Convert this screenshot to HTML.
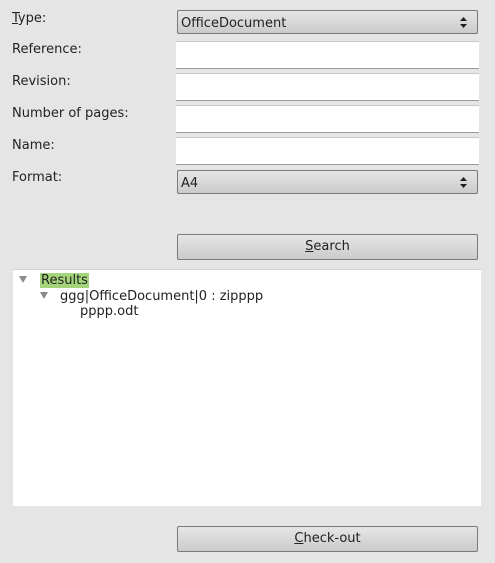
<!DOCTYPE html>
<html><head><style>
body{margin:0;width:495px;height:563px;background:#e5e5e5;font-family:"DejaVu Sans","Liberation Sans",sans-serif;font-size:13px;color:#222;position:relative;overflow:hidden}
.l{position:absolute;left:12px}
.combo,.btn{position:absolute;left:177px;width:301px;height:24px;border:1px solid #7a7a7a;border-radius:2px;background:linear-gradient(#e6e6e6,#cbcbcb);box-sizing:border-box}
.combo span{position:absolute;left:3px;top:5px}
.arr{position:absolute;right:10px;top:6px;width:7px;height:11px}
.in{position:absolute;left:176px;width:303px;height:28px;background:#fff;border-top:1px solid #c9c9c9;border-bottom:1px solid #9a9a9a;box-sizing:border-box}
.btn{text-align:center;line-height:22px}
u{text-decoration:underline}
.tree{position:absolute;left:13px;top:269px;width:468px;height:236px;background:#fff;border-top:1px solid #d0d0d0}
.tri{position:absolute;width:0;height:0;border-left:4px solid transparent;border-right:4px solid transparent;border-top:7px solid #8a8a8a}
</style></head><body>
<div class="l" style="top:11px"><u>T</u>ype:</div>
<div class="combo" style="top:10px"><span>OfficeDocument</span><svg class="arr" viewBox="0 0 7 11"><path d="M0 4L3.5 0L7 4Z M0 7L3.5 11L7 7Z" fill="#222"/></svg></div>
<div class="l" style="top:42px">Reference:</div>
<div class="in" style="top:41px"></div>
<div class="l" style="top:74px">Revision:</div>
<div class="in" style="top:73px"></div>
<div class="l" style="top:106px">Number of pages:</div>
<div class="in" style="top:105px"></div>
<div class="l" style="top:138px">Name:</div>
<div class="in" style="top:137px"></div>
<div class="l" style="top:170px">Format:</div>
<div class="combo" style="top:170px"><span>A4</span><svg class="arr" viewBox="0 0 7 11"><path d="M0 4L3.5 0L7 4Z M0 7L3.5 11L7 7Z" fill="#222"/></svg></div>
<div class="btn" style="top:234px;height:26px;line-height:24px"><u>S</u>earch</div>
<div class="tree">
<div class="tri" style="left:6px;top:6px"></div>
<div style="position:absolute;left:27px;top:3px;background:#a5d57a;padding:0 1px">Results</div>
<div class="tri" style="left:27px;top:22px"></div>
<div style="position:absolute;left:47px;top:19px">ggg|OfficeDocument|0 : zipppp</div>
<div style="position:absolute;left:67px;top:34px">pppp.odt</div>
</div>
<div class="btn" style="top:526px;height:26px;line-height:24px"><u>C</u>heck-out</div>
</body></html>
